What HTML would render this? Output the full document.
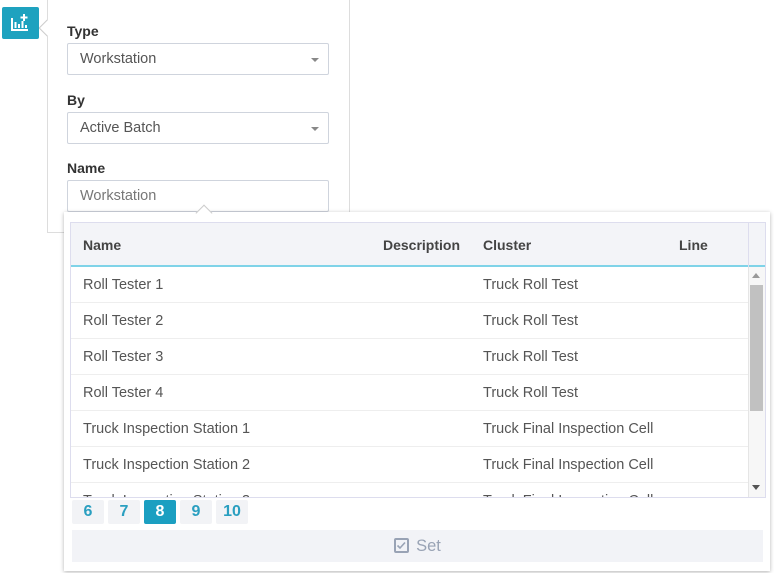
<!DOCTYPE html>
<html><head><meta charset="utf-8"><style>
*{box-sizing:border-box;margin:0;padding:0}
body{width:774px;height:573px;background:#fff;font-family:"Liberation Sans",sans-serif;position:relative;overflow:hidden;color:#555}
.abs{position:absolute}
.btn{left:2px;top:7px;width:37px;height:32px;background:#1ea2bf;border-radius:2px}
.panel{left:47px;top:0;width:303px;height:233px;border:1px solid #ddd;border-top:none;background:#fff}
.lbl{font-size:14px;font-weight:bold;color:#333;left:67px}
.inp{left:67px;width:262px;height:32px;border:1px solid #cfd4dd;border-radius:2px;font-size:14.5px;color:#555;padding:7px 12px;background:#fff}
.caret{position:absolute;right:9px;top:14px;border-left:4px solid transparent;border-right:4px solid transparent;border-top:4px solid #888}
.drop{left:64px;top:212px;width:706px;height:359px;background:#fff;box-shadow:0 1px 4px rgba(0,0,0,.3)}
.grid{left:70px;top:222px;width:696px;height:276px;border:1px solid #dde;overflow:hidden}
.hdr{position:absolute;left:0;top:0;width:694px;height:44px;background:#f3f4f8;border-bottom:2px solid #7fd3e8}
.hdr span{position:absolute;top:14px;font-size:14px;font-weight:bold;color:#444}
.row{position:absolute;left:0;width:677px;height:36px;border-bottom:1px solid #eee;font-size:14.5px;color:#555}
.row span{position:absolute;top:10px}
.sb{position:absolute;left:677px;top:44px;width:17px;height:232px;background:#f7f7f7;border-left:1px solid #e5e5e5}
.pg{top:500px;width:32px;height:24px;background:#f2f3f6;color:#2a9fc0;font-size:16px;font-weight:bold;text-align:center;line-height:24px;border-radius:2px}
.set{left:72px;top:530px;width:691px;height:32px;background:#f2f3f7;color:#99a3b5;font-size:16.5px;text-align:center;line-height:32px}
</style></head><body>
<div class="abs panel"></div>
<div class="abs" style="left:41px;top:22px;width:12px;height:12px;background:#fff;border-left:1px solid #ccc;border-bottom:1px solid #ccc;transform:rotate(45deg)"></div>
<div class="abs btn"><svg width="37" height="32" viewBox="0 0 37 32"><g fill="none" stroke="#fff" stroke-width="2"><path d="M10 11v12h16"/><path d="M13.5 15v6M17 17v4M20.5 14v7M24 18v3"/><path d="M22 7v7M18.5 10.5h7"/></g></svg></div>
<div class="abs lbl" style="top:23px">Type</div>
<div class="abs inp" style="top:43px">Workstation<i class="caret"></i></div>
<div class="abs lbl" style="top:92px">By</div>
<div class="abs inp" style="top:112px">Active Batch<i class="caret"></i></div>
<div class="abs lbl" style="top:160px">Name</div>
<div class="abs inp" style="top:180px;color:#777">Workstation</div>
<div class="abs drop"></div>
<div class="abs" style="left:198px;top:207px;width:12px;height:12px;background:#fff;border-left:1px solid #ccc;border-top:1px solid #ccc;transform:rotate(45deg)"></div>
<div class="abs grid">
<div class="hdr"><span style="left:12px">Name</span><span style="left:312px">Description</span><span style="left:412px">Cluster</span><span style="left:608px">Line</span><i style="position:absolute;left:677px;top:0;width:1px;height:44px;background:#dde"></i></div>
<div class="row" style="top:44px"><span style="left:12px">Roll Tester 1</span><span style="left:412px">Truck Roll Test</span></div>
<div class="row" style="top:80px"><span style="left:12px">Roll Tester 2</span><span style="left:412px">Truck Roll Test</span></div>
<div class="row" style="top:116px"><span style="left:12px">Roll Tester 3</span><span style="left:412px">Truck Roll Test</span></div>
<div class="row" style="top:152px"><span style="left:12px">Roll Tester 4</span><span style="left:412px">Truck Roll Test</span></div>
<div class="row" style="top:188px"><span style="left:12px">Truck Inspection Station 1</span><span style="left:412px">Truck Final Inspection Cell</span></div>
<div class="row" style="top:224px"><span style="left:12px">Truck Inspection Station 2</span><span style="left:412px">Truck Final Inspection Cell</span></div>
<div class="row" style="top:260px"><span style="left:12px">Truck Inspection Station 3</span><span style="left:412px">Truck Final Inspection Cell</span></div>
<div class="sb"><div style="position:absolute;left:3px;top:6px;border-left:4px solid transparent;border-right:4px solid transparent;border-bottom:5px solid #999"></div><div style="position:absolute;left:1px;top:18px;width:13px;height:126px;background:#c1c1c1"></div><div style="position:absolute;left:3px;top:218px;border-left:4px solid transparent;border-right:4px solid transparent;border-top:5px solid #555"></div></div>
</div>
<div class="abs pg" style="left:72px">6</div>
<div class="abs pg" style="left:108px">7</div>
<div class="abs pg" style="left:144px;background:#1b9fc1;color:#fff">8</div>
<div class="abs pg" style="left:180px">9</div>
<div class="abs pg" style="left:216px">10</div>
<div class="abs set"><span style="display:inline-block;width:15px;height:15px;border:2px solid #99a3b5;border-radius:2px;vertical-align:-2px;margin-right:7px;position:relative"><svg width="11" height="11" style="position:absolute;left:0;top:0"><path d="M1.5 5.5l2.5 2.5 5-5.5" fill="none" stroke="#99a3b5" stroke-width="1.6"/></svg></span>Set</div>
</body></html>
